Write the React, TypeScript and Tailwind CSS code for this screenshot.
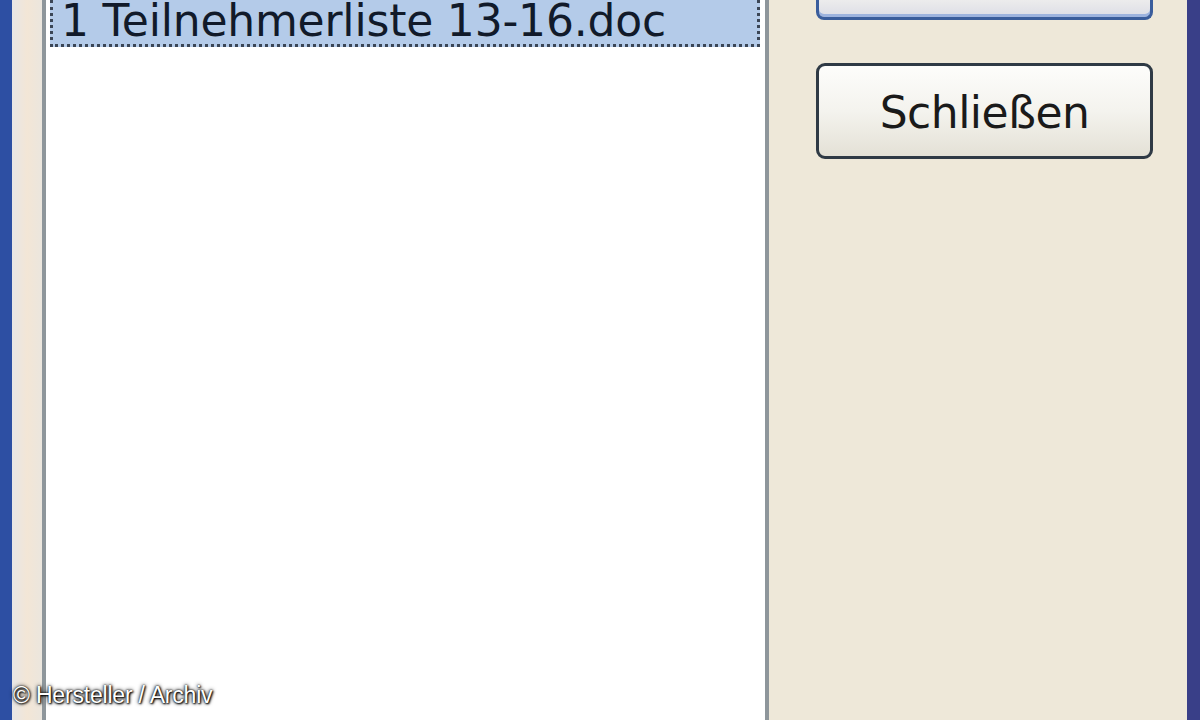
export default function App() {
  return (
    <div className="relative flex h-[720px] w-[1200px] overflow-hidden bg-[#ece9d8] font-['DejaVu_Sans',sans-serif]">
      {/* linker Fensterrahmen */}
      <div className="w-[12px] shrink-0 bg-[#2d4fa3]" />
      <div className="w-[30px] shrink-0 bg-gradient-to-r from-[#e8e6e6] via-[#f3e6d6] to-[#ebe6de]" />

      {/* Liste */}
      <div className="flex w-[727px] shrink-0 flex-col border-x-[4px] border-x-[#8e969b] bg-white pl-[4px] pr-[5px]">
        <div className="flex h-[47px] items-end border-[3px] border-t-0 border-dotted border-[#3b4656] bg-[#b4cbe9] pl-[8px]">
          <span className="text-[44px] leading-[46px] tracking-[-0.2px] text-[#111a2a]">
            1 Teilnehmerliste 13-16.doc
          </span>
        </div>
      </div>

      {/* Schaltflächen */}
      <div className="flex flex-1 flex-col bg-[#eee8d9] pl-[47px] pr-[34px]">
        <div className="-mt-[10px] h-[30px] w-[337px] rounded-b-[8px] border-[3px] border-t-0 border-[#3a5d9c] bg-gradient-to-b from-[#f6f5f0] to-[#dcdde6] shadow-[inset_0_-3px_0_#9db3de]" />
        <button
          type="button"
          className="mt-[43px] flex h-[96px] w-[337px] items-center justify-center rounded-[9px] border-[3px] border-[#2f3a45] bg-gradient-to-b from-[#fdfdfb] via-[#f4f3ee] to-[#e4e1d6] pt-[4px] text-[44px] tracking-[-0.5px] text-[#1a1a1a]"
        >
          Schließen
        </button>
      </div>

      {/* rechter Fensterrahmen */}
      <div className="w-[14px] shrink-0 bg-[#393f88]" />

      <span className="absolute bottom-[8px] left-[13px] font-['Liberation_Sans',sans-serif] text-[23px] tracking-[-0.2px] text-white [text-shadow:0_0_2px_#000,0_0_4px_#000,1px_1px_2px_#000]">
        © Hersteller / Archiv
      </span>
    </div>
  )
}
